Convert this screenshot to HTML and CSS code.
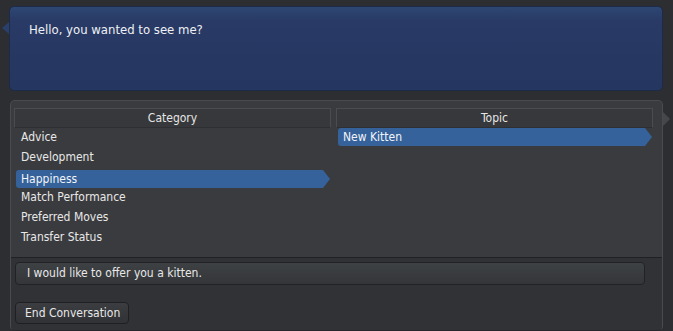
FILE: index.html
```html
<!DOCTYPE html>
<html lang="en">
<head>
    <meta charset="UTF-8">
    <meta name="viewport" content="width=device-width, initial-scale=1.0">
    <title>Conversation</title>
    <link rel="stylesheet" href="styles.css">
</head>
<body>
    <div class="screen">
        <div class="speech">
            <p>Hello, you wanted to see me?</p>
        </div>

        <div class="panel">
            <div class="columns">
                <div class="column category">
                    <div class="column-head">Category</div>
                    <ul class="list">
                        <li class="item">Advice</li>
                        <li class="item">Development</li>
                        <li class="item selected">Happiness</li>
                        <li class="item">Match Performance</li>
                        <li class="item">Preferred Moves</li>
                        <li class="item">Transfer Status</li>
                    </ul>
                </div>
                <div class="column topic">
                    <div class="column-head">Topic</div>
                    <ul class="list">
                        <li class="item selected">New Kitten</li>
                    </ul>
                </div>
            </div>

            <div class="footer">
                <div class="reply">I would like to offer you a kitten.</div>
                <button class="end-btn">End Conversation</button>
            </div>
        </div>
    </div>
</body>
</html>
```

FILE: styles.css
```css
body {
    margin: 0;
    background-color: #2d2e31;
    font-family: "DejaVu Sans Condensed", "DejaVu Sans", sans-serif;
    font-stretch: condensed;
    color: #e8e8e8;
    overflow: hidden;
}
.screen {
    padding-top: 6px;
}

/* npc speech bubble */
.speech {
    position: relative;
    box-sizing: border-box;
    width: 654px;
    height: 85px;
    margin-left: 9px;
    padding: 15px 19px 0;
    background: linear-gradient(to bottom, #2e4773 0px, #283a65 14px, #253660 100%);
    border: 1px solid #1d2a4a;
    border-radius: 5px;
}
.speech::before {
    content: "";
    position: absolute;
    left: -8px;
    top: 15px;
    border-style: solid;
    border-width: 6px 7px 6px 0;
    border-color: transparent #2a3f6a transparent transparent;
}
.speech p {
    margin: 0;
    font-size: 13px;
    line-height: 16px;
    color: #eef0f4;
}

/* choices panel */
.panel {
    position: relative;
    box-sizing: border-box;
    width: 653px;
    height: 231px;
    margin: 9px 0 0 10px;
    background-color: #3a3b3e;
    border: 1px solid #4a4b4e;
    border-bottom-color: #26272a;
    border-radius: 5px;
}
.panel::after {
    content: "";
    position: absolute;
    right: -8px;
    top: 11px;
    border-style: solid;
    border-width: 7px 0 7px 7px;
    border-color: transparent transparent transparent #46474a;
}
.columns {
    display: grid;
    grid-template-columns: 317px 317px;
    column-gap: 5px;
    height: 156px;
    padding: 7px 9px 0 3px;
    box-sizing: border-box;
}
.column-head {
    height: 20px;
    box-sizing: border-box;
    border: 1px solid #4b4c4f;
    border-bottom-color: #2e2f32;
    background-color: #37383b;
    text-align: center;
    font-size: 12px;
    line-height: 18px;
    color: #e6e6e6;
}
.list {
    display: flex;
    flex-direction: column;
    list-style: none;
    margin: 0;
    padding: 0 0 0 2px;
}
.item {
    height: 18px;
    margin-bottom: 2px;
    padding-left: 5px;
    font-size: 12px;
    line-height: 18px;
    color: #e8e8e8;
}
.item.selected {
    margin-right: 1px;
    background-color: #35629b;
    border-radius: 3px 0 0 3px;
    clip-path: polygon(0 0, calc(100% - 7px) 0, 100% 50%, calc(100% - 7px) 100%, 0 100%);
    color: #f2f4f8;
}
.category .item.selected {
    margin: 2px 1px 0 0;
}

/* reply + buttons */
.footer {
    height: 73px;
    box-sizing: border-box;
    padding: 4px 0 0 4px;
    border-top: 1px solid #202124;
    background-color: #313235;
    border-radius: 0 0 4px 4px;
}
.reply {
    box-sizing: border-box;
    width: 630px;
    height: 23px;
    padding-left: 11px;
    background: linear-gradient(to bottom, #3e4144, #34363a);
    border: 1px solid #212224;
    border-radius: 4px;
    font-size: 12px;
    line-height: 21px;
    color: #e8e8e8;
}
.end-btn {
    display: block;
    box-sizing: border-box;
    width: 114px;
    height: 22px;
    margin-top: 17px;
    padding: 0 0 0 9px;
    text-align: left;
    background: linear-gradient(to bottom, #3b3d40, #303235);
    border: 1px solid #1f2022;
    border-radius: 4px;
    font-family: "DejaVu Sans Condensed", "DejaVu Sans", sans-serif;
    font-stretch: condensed;
    font-size: 12px;
    line-height: 20px;
    color: #e8e8e8;
    cursor: pointer;
}
```
